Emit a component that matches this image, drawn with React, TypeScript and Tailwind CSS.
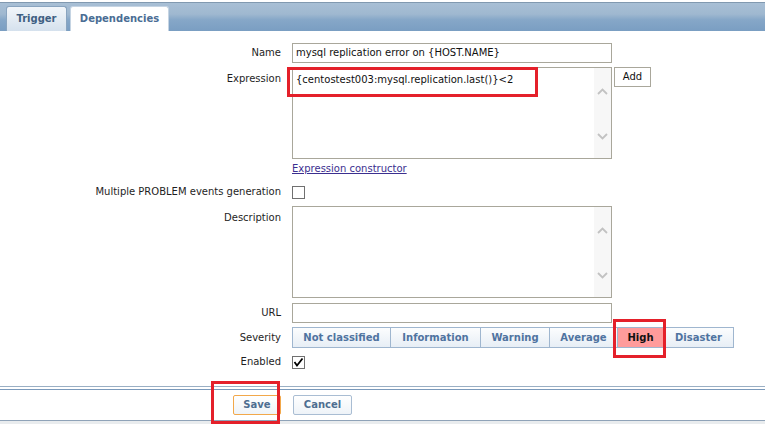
import React from 'react'

const severities = [
  { name: 'Not classified', w: 'w-[99px]' },
  { name: 'Information', w: 'w-[91px]' },
  { name: 'Warning', w: 'w-[70px]' },
  { name: 'Average', w: 'w-[69px]' },
  { name: 'High', w: 'w-[47px]', active: true },
  { name: 'Disaster', w: 'w-[71px]' },
]

function Scrollbar() {
  return (
    <div className="absolute right-0 top-0 bottom-0 w-[17px] bg-[#f7f7f7] flex flex-col items-center justify-between pt-[20px] pb-[18px]">
      <svg width="11" height="7" viewBox="0 0 11 7">
        <polyline points="1,6 5.5,1.5 10,6" fill="none" stroke="#c2c2c2" strokeWidth="1.8" />
      </svg>
      <svg width="11" height="7" viewBox="0 0 11 7">
        <polyline points="1,1 5.5,5.5 10,1" fill="none" stroke="#c2c2c2" strokeWidth="1.8" />
      </svg>
    </div>
  )
}

function Checkbox({ checked }: { checked?: boolean }) {
  return (
    <div className="w-[13px] h-[13px] border border-[#707070] bg-white relative">
      {checked && (
        <svg className="absolute left-0 top-0" width="11" height="11" viewBox="0 0 11 11">
          <polyline points="1.5,5 4,8.5 9.5,1.5" fill="none" stroke="#000" strokeWidth="1.8" />
        </svg>
      )}
    </div>
  )
}

function Label({ children, top }: { children: React.ReactNode; top?: boolean }) {
  return (
    <div className={`w-[281px] text-right text-[#1e1e1e] ${top ? 'pt-[6px]' : ''}`}>{children}</div>
  )
}

export default function App() {
  return (
    <div className="w-[765px] h-[424px] bg-white relative overflow-hidden font-['DejaVu_Sans',sans-serif] text-[10px] leading-[12px]">
      {/* tab bar */}
      <div className="pt-[2px]">
        <div className="h-[29px] border-t border-[#8199b0] bg-[linear-gradient(to_bottom,#a8bfd5_0%,#9fb8d0_40%,#86a7c8_60%,#7a9ec2_100%)] flex items-end pl-[6px] gap-[3px]">
          <div className="h-[25px] w-[61px] rounded-t-[3px] border border-b-0 border-[#89a4bf] bg-[linear-gradient(to_bottom,#f2f6fa,#d5e1ed)] flex items-center justify-center font-bold text-[#3e5f82]">
            Trigger
          </div>
          <div className="h-[25px] w-[99px] rounded-t-[3px] border border-b-0 border-[#c5d4e3] bg-white flex items-center justify-center font-bold text-[#4a6d94]">
            Dependencies
          </div>
        </div>
      </div>

      {/* form */}
      <div className="flex flex-col pt-[12px]">
        <div className="flex items-center h-[20px]">
          <Label>Name</Label>
          <div className="ml-[11px] w-[320px] h-[20px] border border-[#a9a79b] flex items-center px-[3px] text-[#111]">
            mysql replication error on {'{HOST.NAME}'}
          </div>
        </div>

        <div className="flex items-start mt-[4px]">
          <Label top>Expression</Label>
          <div className="ml-[11px] w-[320px] h-[92px] border border-[#a9a79b] relative px-[3px] pt-[6px] text-[#111]">
            {'{centostest003:mysql.replication.last()}<2'}
            <Scrollbar />
          </div>
          <div className="ml-[2px] w-[37px] h-[20px] border border-[#a9a79b] flex items-center justify-center text-[#111]">
            Add
          </div>
        </div>

        <div className="flex items-center mt-[3px] h-[14px]">
          <Label>{''}</Label>
          <span className="ml-[11px] text-[#3b2f8f] underline">Expression constructor</span>
        </div>

        <div className="flex items-center mt-[9px] h-[14px]">
          <Label>Multiple PROBLEM events generation</Label>
          <div className="ml-[11px]">
            <Checkbox />
          </div>
        </div>

        <div className="flex items-start mt-[7px]">
          <Label top>Description</Label>
          <div className="ml-[11px] w-[320px] h-[92px] border border-[#a9a79b] relative">
            <Scrollbar />
          </div>
        </div>

        <div className="flex items-center h-[20px] mt-[5px]">
          <Label>URL</Label>
          <div className="ml-[11px] w-[320px] h-[20px] border border-[#a9a79b]" />
        </div>

        <div className="flex items-center h-[21px] mt-[4px]">
          <Label>Severity</Label>
          <div className="ml-[11px] flex h-[21px]">
            {severities.map((s) => (
              <div
                key={s.name}
                className={`${s.w} h-[21px] border border-[#9fb6cf] -ml-px first:ml-0 flex items-center justify-center font-bold ${
                  s.active
                    ? 'bg-[#ff9b9b] text-[#111]'
                    : 'bg-[linear-gradient(to_bottom,#fcfdfe,#e7eef5)] text-[#4f73a0]'
                }`}
              >
                {s.name}
              </div>
            ))}
          </div>
        </div>

        <div className="flex items-center mt-[7px] h-[14px]">
          <Label>Enabled</Label>
          <div className="ml-[11px]">
            <Checkbox checked />
          </div>
        </div>

        {/* footer */}
        <div className="mt-[17px] border-t border-[#9aafc4] h-[3px]" />
        <div className="border-t border-[#7b9abb] h-[31px] flex items-start pt-[5px]">
          <div className="w-[281px] flex justify-end">
            <div className="w-[48px] h-[20px] rounded-[2px] border border-[#f2a84a] bg-[linear-gradient(to_bottom,#ffffff,#eef3f8)] flex items-center justify-center font-bold text-[#4e6e91]">
              Save
            </div>
          </div>
          <div className="ml-[12px] w-[59px] h-[20px] rounded-[2px] border border-[#a9bdd3] bg-[linear-gradient(to_bottom,#ffffff,#eef3f8)] flex items-center justify-center font-bold text-[#4e6e91]">
            Cancel
          </div>
        </div>
        <div className="border-t border-[#8fa3b8] h-[5px] bg-[#e9ecee]" />
      </div>

      {/* annotation boxes */}
      <div className="absolute left-[287px] top-[67px] w-[251px] h-[30px] border-[3px] border-[#e4202a]" />
      <div className="absolute left-[613px] top-[319px] w-[53px] h-[39px] border-[3px] border-[#e4202a]" />
      <div className="absolute left-[211px] top-[381px] w-[69px] h-[43px] border-[3px] border-[#e4202a]" />
    </div>
  )
}
